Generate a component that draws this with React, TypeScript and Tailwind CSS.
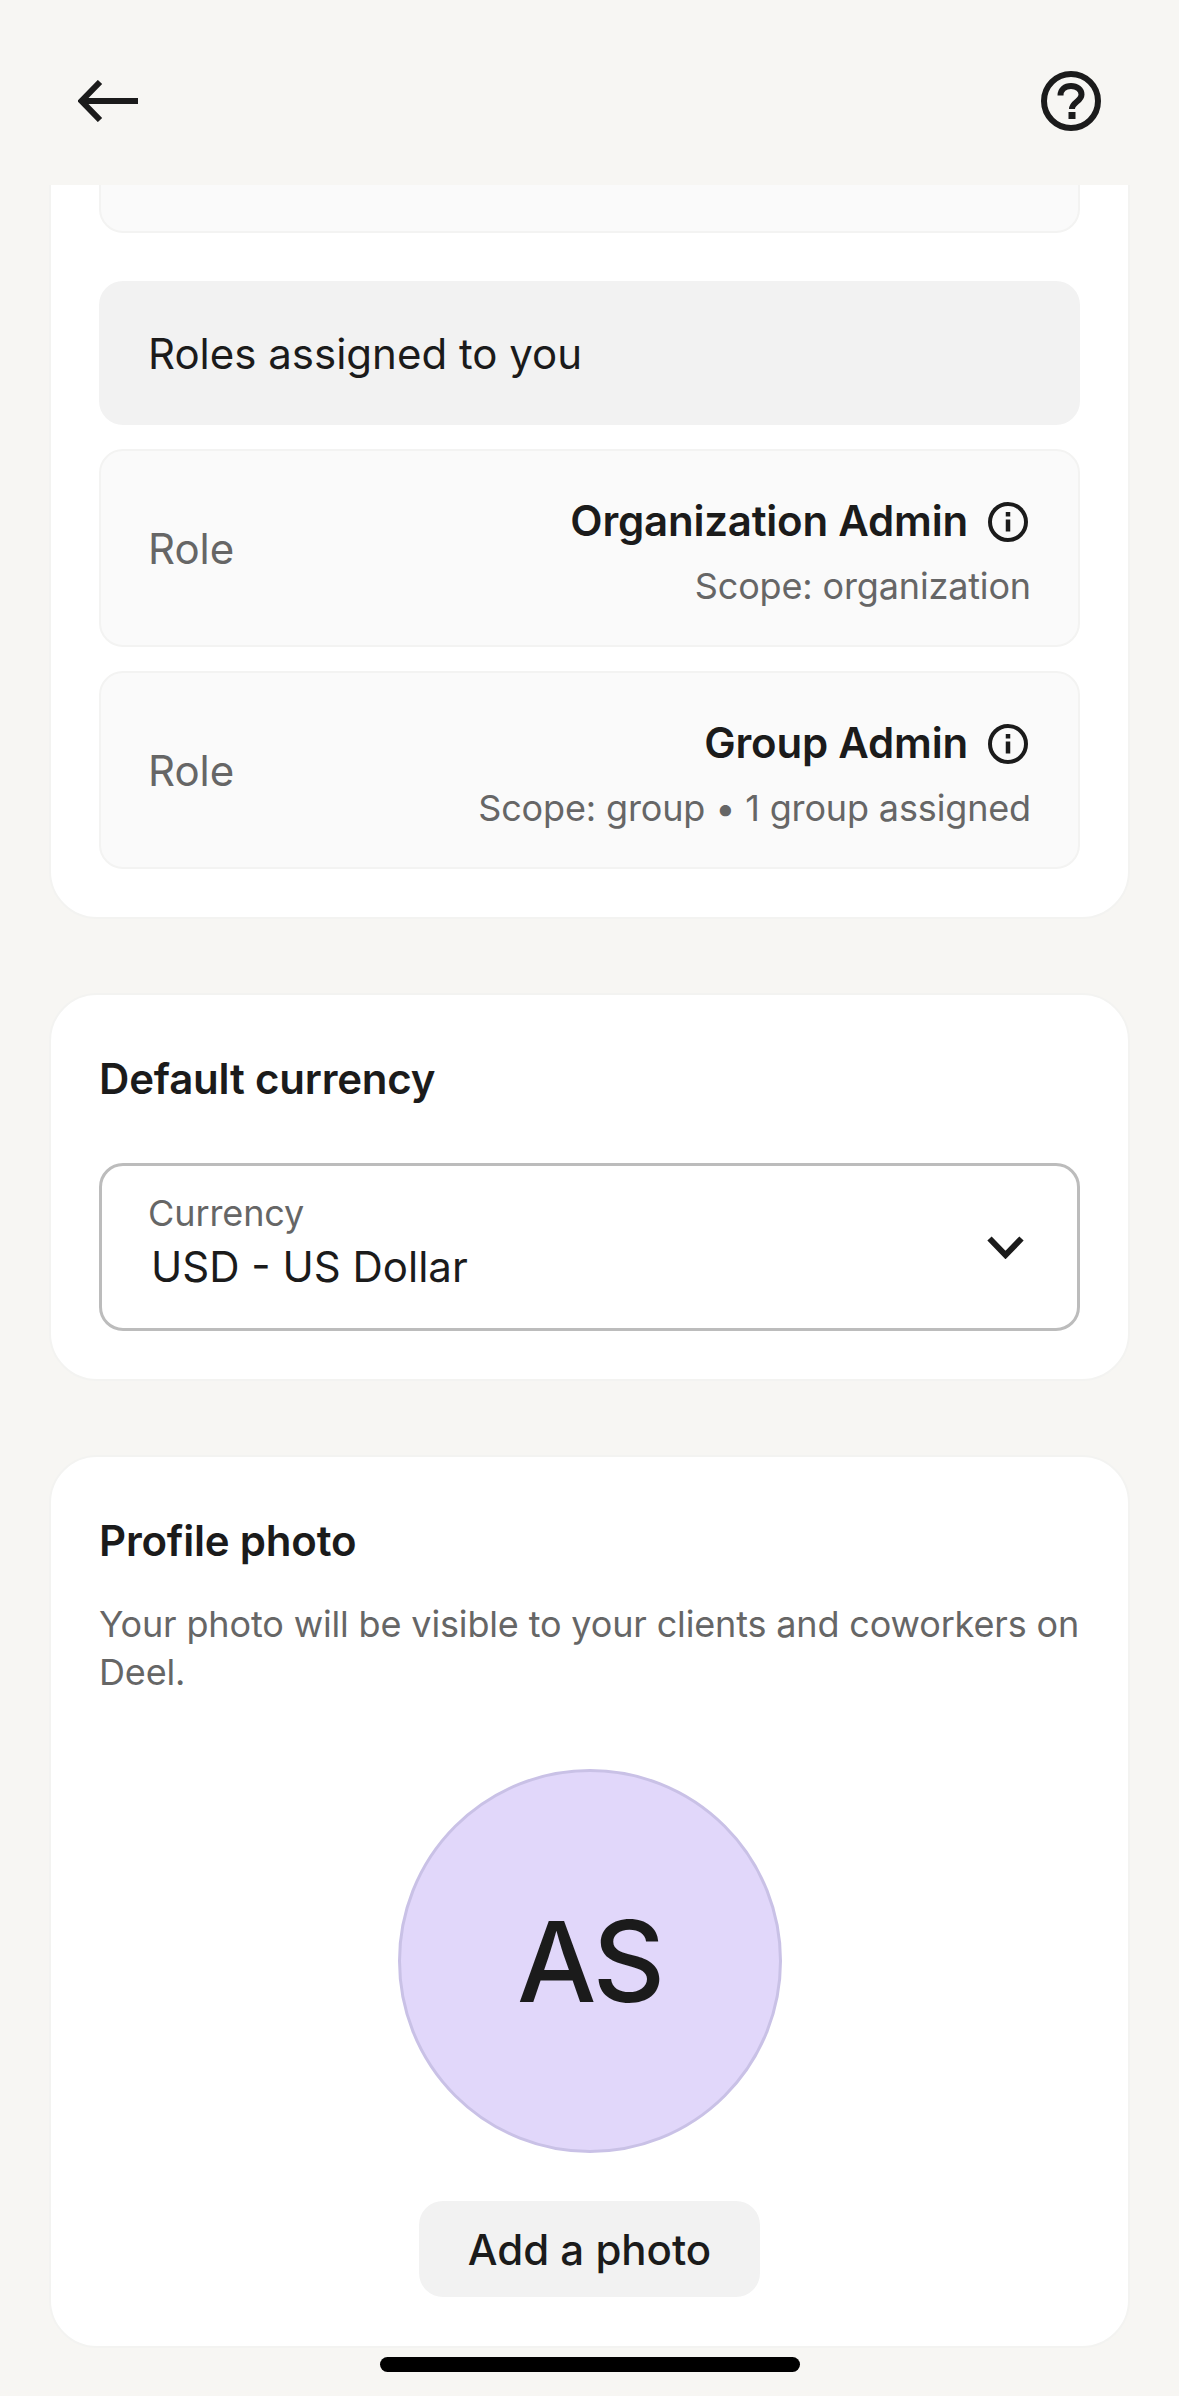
const FONT = "font-['Inter','Noto_Sans',sans-serif]";

function HelpIcon() {
  return (
    <svg width="60" height="60" viewBox="0 0 60 60" fill="none" stroke="#1b1b1b" strokeWidth="6">
      <circle cx="30" cy="30" r="27" />
      <path d="M19.500 24.500c0-6 4.500-9.500 10.500-9.500s10.500 3.500 10.500 8.500c0 7-9.500 7.500-9.500 14.500" />
      <path d="M31 41v7" strokeWidth="7" />
    </svg>
  );
}

function BackIcon() {
  return (
    <svg width="60" height="42" viewBox="0 0 60 42" fill="none" stroke="#1b1b1b" strokeWidth="6">
      <path d="M60 21H4" />
      <path d="M22 2 3.500 21 22 40" />
    </svg>
  );
}

function InfoIcon() {
  return (
    <svg width="40" height="40" viewBox="0 0 40 40" fill="none" stroke="#1b1b1b" strokeWidth="4" className="mt-[4px]">
      <circle cx="20" cy="20" r="18" />
      <path d="M20 17.500v12" strokeWidth="4.500" />
      <path d="M20 10v4.500" strokeWidth="4.500" />
    </svg>
  );
}

function ChevronIcon() {
  return (
    <svg width="37" height="23" viewBox="0 0 37 23" fill="none" stroke="#1b1b1b" strokeWidth="6">
      <path d="M2.500 2.500 18.500 19l16-16.500" />
    </svg>
  );
}

function RoleRow({ title, scope }: { title: string; scope: string }) {
  return (
    <div className="flex h-[198px] items-center justify-between rounded-[24px] border-2 border-[#f3f3f2] bg-[#fafafa] pl-[47px] pr-[50px]">
      <span className="text-[42px] text-[#666666]">Role</span>
      <div className="flex flex-col items-end gap-[24px] pt-[10px]">
        <div className="flex h-[42px] items-center gap-[20px]">
          <span className="text-[42px] font-semibold tracking-[-0.2px] text-[#1b1b1b]">{title}</span>
          <InfoIcon />
        </div>
        <span className="-mr-[3px] h-[42px] text-[36px] leading-[42px] tracking-[-0.15px] text-[#666666]">{scope}</span>
      </div>
    </div>
  );
}

function Card({ children, className }: { children: React.ReactNode; className?: string }) {
  return (
    <section className={`rounded-[48px] border-2 border-[#f3f3f1] bg-white px-[48px] ${className ?? ""}`}>
      {children}
    </section>
  );
}

export default function App() {
  return (
    <div className={`relative flex h-[2396px] w-[1179px] flex-col overflow-hidden bg-[#f7f6f3] ${FONT}`}>
      <header className="flex h-[185px] shrink-0 items-start justify-between px-[78px]">
        <div className="pt-[80px]">
          <BackIcon />
        </div>
        <div className="pt-[71px]">
          <HelpIcon />
        </div>
      </header>

      <main className="min-h-0 flex-1 overflow-hidden px-[49px]">
        <Card className="-mt-[82px] pb-[48px] pt-0">
          <div className="h-[128px] rounded-b-[24px] border-2 border-[#f3f3f2] bg-[#fafafa]" />
          <div className="mt-[48px] flex h-[144px] items-center rounded-[24px] bg-[#f2f2f2] px-[49px] text-[42px] text-[#1b1b1b]">
            Roles assigned to you
          </div>
          <div className="mt-[24px] flex flex-col gap-[24px]">
            <RoleRow title="Organization Admin" scope="Scope: organization" />
            <RoleRow title="Group Admin" scope="Scope: group • 1 group assigned" />
          </div>
        </Card>

        <Card className="mt-[74px] h-[388px] pt-[60px]">
          <h2 className="text-[42px] font-semibold leading-[48px] tracking-[-0.2px] text-[#1b1b1b]">Default currency</h2>
          <div className="mt-[60px] flex h-[168px] items-center justify-between rounded-[24px] border-[3px] border-[#bcbcbc] pl-[46px] pr-[53px]">
            <div className="flex h-full flex-col pt-[25px]">
              <span className="text-[36px] leading-[44px] tracking-[-0.1px] text-[#666666]">Currency</span>
              <span className="mt-[7px] pl-[3px] text-[42px] leading-[50px] text-[#1b1b1b]">USD - US Dollar</span>
            </div>
            <ChevronIcon />
          </div>
        </Card>

        <Card className="mt-[74px] h-[893px] pt-[60px]">
          <h2 className="text-[42px] font-semibold leading-[48px] tracking-[-0.2px] text-[#1b1b1b]">Profile photo</h2>
          <p className="mt-[35px] text-[36px] leading-[48px] tracking-[-0.15px] text-[#666666]">
            Your photo will be visible to your clients and coworkers on Deel.
          </p>
          <div className="mt-[73px] flex flex-col items-center">
            <div className="flex h-[384px] w-[384px] items-center justify-center rounded-full border-[3px] border-[#c9c1e6] bg-[#e1d7fa] text-[112px] font-medium tracking-[-3px] text-[#1b1b1b]">
              AS
            </div>
            <button className="mt-[48px] flex h-[96px] w-[341px] items-center justify-center rounded-[24px] bg-[#f2f2f2] text-[42px] font-medium text-[#1b1b1b]">
              Add a photo
            </button>
          </div>
        </Card>
      </main>

      <div className="absolute bottom-[24px] left-[380px] h-[15px] w-[420px] rounded-full bg-black" />
    </div>
  );
}
